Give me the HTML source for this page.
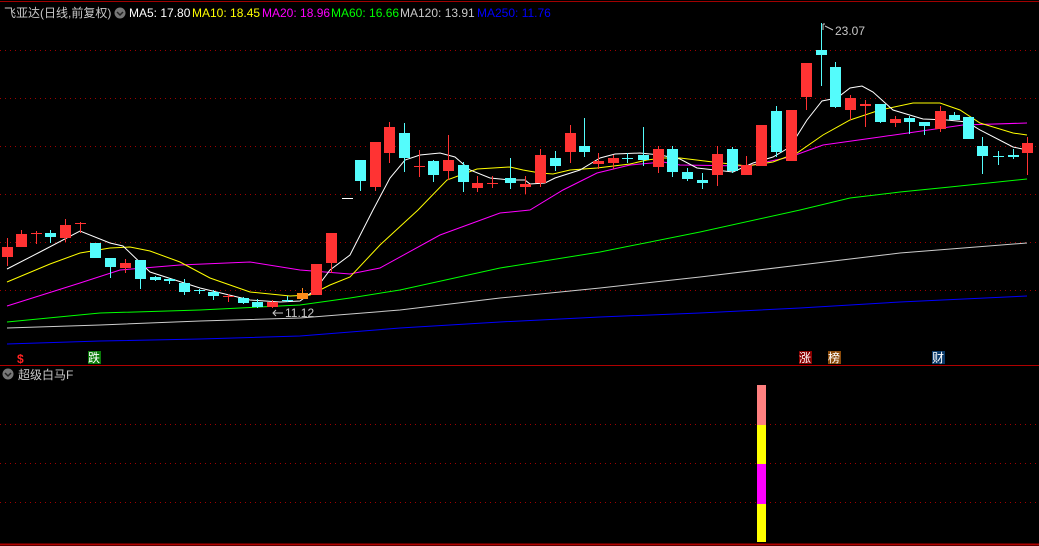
<!DOCTYPE html>
<html><head><meta charset="utf-8"><style>
body{margin:0;background:#000;width:1039px;height:546px;overflow:hidden;font-family:"Liberation Sans","Noto Sans CJK SC",sans-serif}
svg{display:block}
</style></head><body>
<svg id="s" width="1039" height="546" xmlns="http://www.w3.org/2000/svg">
<rect width="1039" height="546" fill="#000"/>
<line x1="0" y1="1.5" x2="1039" y2="1.5" stroke="#a00000"/>
<g stroke="#a00000" stroke-dasharray="1,4">
<line x1="0" y1="50.5" x2="1039" y2="50.5"/><line x1="0" y1="98.5" x2="1039" y2="98.5"/>
<line x1="0" y1="146.5" x2="1039" y2="146.5"/><line x1="0" y1="194.5" x2="1039" y2="194.5"/>
<line x1="0" y1="242.5" x2="1039" y2="242.5"/><line x1="0" y1="290.5" x2="1039" y2="290.5"/>
<line x1="0" y1="424.5" x2="1039" y2="424.5"/><line x1="0" y1="463.5" x2="1039" y2="463.5"/>
<line x1="0" y1="502.5" x2="1039" y2="502.5"/>
</g>
<line x1="0" y1="365.5" x2="1039" y2="365.5" stroke="#b00000"/>
<line x1="0" y1="544.5" x2="1039" y2="544.5" stroke="#b00000" stroke-width="2"/>
<g font-size="12">
<text x="4" y="17" fill="#c8c8c8">飞亚达(日线,前复权)</text>
<circle cx="120" cy="13" r="5.5" fill="#777"/><path d="M117 12l3 3 3-3" stroke="#222" fill="none" stroke-width="1.5"/>
<text x="129" y="17" fill="#fff">MA5: 17.80</text>
<text x="192" y="17" fill="#ff0">MA10: 18.45</text>
<text x="262" y="17" fill="#f0f">MA20: 18.96</text>
<text x="331" y="17" fill="#0f0">MA60: 16.66</text>
<text x="400" y="17" fill="#c8c8c8">MA120: 13.91</text>
<text x="477" y="17" fill="#00f">MA250: 11.76</text>
<circle cx="8" cy="374" r="5.5" fill="#777"/><path d="M5 373l3 3 3-3" stroke="#222" fill="none" stroke-width="1.5"/>
<text x="18" y="379" fill="#c8c8c8">超级白马F</text>
<text x="835" y="35" fill="#c8c8c8">23.07</text>
<path d="M823 24h2M823 24v6M825 26l8 4" stroke="#c8c8c8" fill="none"/>
<text x="285" y="317" fill="#c8c8c8">11.12</text>
<path d="M273 313h10M276 310l-3 3 3 3" stroke="#c8c8c8" fill="none"/>
</g>
<g font-size="12">
<text x="17" y="363" fill="#f22" font-weight="bold">$</text>
<rect x="88" y="351" width="13" height="13" fill="#0a7a0a"/><text x="88" y="362" fill="#fff">跌</text>
<rect x="799" y="351" width="13" height="13" fill="#8a0000"/><text x="799" y="362" fill="#fff">涨</text>
<rect x="828" y="351" width="13" height="13" fill="#8a4a0a"/><text x="828" y="362" fill="#fff">榜</text>
<rect x="932" y="351" width="13" height="13" fill="#0a3a6a"/><text x="932" y="362" fill="#fff">财</text>
</g>
<rect x="757" y="385" width="9" height="40" fill="#ff8080"/>
<rect x="757" y="425" width="9" height="39" fill="#ff0"/>
<rect x="757" y="464" width="9" height="40" fill="#f0f"/>
<rect x="757" y="504" width="9" height="38" fill="#ff0"/>
<g fill="none" stroke-width="1">
<polyline stroke="#00f" points="7,344 100,341 200,339 300,336 400,328 500,322 600,317 700,313 800,308 900,302 1027,296"/>
<polyline stroke="#ccc" points="7,328 100,325 200,321 300,318 400,310 500,298 600,288 700,277 800,265 900,253 1027,243"/>
<polyline stroke="#0f0" points="7,322 100,313 200,310 300,305 350,298 400,290 500,268 600,252 700,232 800,210 850,198 900,192 950,187 1027,179"/>
<polyline stroke="#f0f" points="7,306 80,283 120,270 180,265 250,262 300,270 350,274 380,268 440,235 500,213 530,210 563,190 597,173 630,165 663,162 680,165 747,166 790,157 823,145 880,137 963,125 1027,123"/>
<polyline stroke="#ff0" points="7,282 50,264 80,253 110,248 130,247 150,251 180,262 210,278 250,292 290,296 310,295 330,285 350,277 380,245 418,210 447,180 477,169 510,167 523,170 540,173 553,174 570,170 597,168 630,164 647,160 663,158 680,158 713,162 747,166 773,162 797,153 823,135 850,120 880,110 913,103 940,103 960,110 980,123 1013,133 1027,135"/>
<polyline stroke="#fff" points="7,269 40,252 80,231 110,243 123,246 150,272 200,288 250,300 280,302 300,301 315,290 330,270 350,255 373,210 390,178 405,160 420,155 440,153 455,157 470,170 490,178 510,180 525,180 530,184 545,183 555,178 580,170 600,158 615,154 640,153 660,155 680,159 697,168 733,172 753,163 773,157 790,147 807,120 822,101 837,98 850,88 862,86 873,92 893,110 923,119 947,120 967,122 980,130 1013,147 1027,150"/>
</g>
<g id="c"></g>
</svg>
<script>
var d=[[7,247,257,238,266,'r'],[21,234,247,230,247,'r'],[36,233,234,231,244,'r'],[50,233,237,230,243,'c'],[65,225,238,219,242,'r'],[80,223,223,222,233,'r'],[95,243,258,243,258,'c'],[110,258,267,258,278,'c'],[125,263,268,259,273,'r'],[140,260,279,260,289,'c'],[155,277,280,276,281,'c'],[169,279,281,278,284,'c'],[184,283,292,279,295,'c'],[199,290,291,289,294,'c'],[213,292,296,290,300,'c'],[228,296,296,294,302,'r'],[243,298,303,297,304,'c'],[257,302,307,299,308,'c'],[272,302,307,300,308,'r'],[287,300,300,296,302,'c'],[302,293,299,288,299,'o'],[316,264,295,264,295,'r'],[331,233,263,233,273,'r'],[347,198,198,198,198,'w'],[360,160,181,160,191,'c'],[375,142,187,142,191,'r'],[389,127,153,122,163,'r'],[404,133,158,123,172,'c'],[419,166,166,150,177,'r'],[433,161,175,160,182,'c'],[448,160,171,135,180,'r'],[463,165,182,162,192,'c'],[477,183,188,176,192,'r'],[492,183,183,176,188,'r'],[510,178,183,158,189,'c'],[525,184,187,176,194,'r'],[540,155,183,149,187,'r'],[555,158,166,151,171,'c'],[570,133,152,125,163,'r'],[584,146,152,118,157,'c'],[598,161,164,153,169,'r'],[613,158,163,155,169,'r'],[627,158,158,153,163,'c'],[643,155,160,127,166,'c'],[658,149,167,146,173,'r'],[672,149,172,146,177,'c'],[687,172,179,168,181,'c'],[702,180,183,173,189,'c'],[717,154,175,146,186,'r'],[732,149,171,147,173,'c'],[746,165,175,156,175,'r'],[761,125,166,125,166,'r'],[776,111,152,106,157,'c'],[791,110,161,110,161,'r'],[806,63,97,63,110,'r'],[821,50,55,23,86,'c'],[835,67,107,62,108,'c'],[850,98,110,95,120,'r'],[865,104,106,100,127,'r'],[880,104,122,104,123,'c'],[895,119,123,116,127,'r'],[909,118,122,116,134,'c'],[924,122,126,122,135,'c'],[940,111,129,106,132,'r'],[954,115,120,112,120,'c'],[968,117,139,117,139,'c'],[982,146,156,137,174,'c'],[998,156,157,151,165,'c'],[1013,155,157,149,159,'c'],[1027,143,153,137,175,'r']];
var col={r:'#ff3333',c:'#54fcfc',o:'#ff8c1a',w:'#fff'},h='';
d.forEach(function(a){var c=col[a[5]];var bh=Math.max(1,a[2]-a[1]);
h+='<line x1="'+(a[0]+.5)+'" y1="'+a[3]+'" x2="'+(a[0]+.5)+'" y2="'+a[4]+'" stroke="'+c+'"/>';
h+='<rect x="'+(a[0]-5)+'" y="'+a[1]+'" width="11" height="'+bh+'" fill="'+c+'"/>';});
document.getElementById('c').innerHTML=h;
</script>
</body></html>
